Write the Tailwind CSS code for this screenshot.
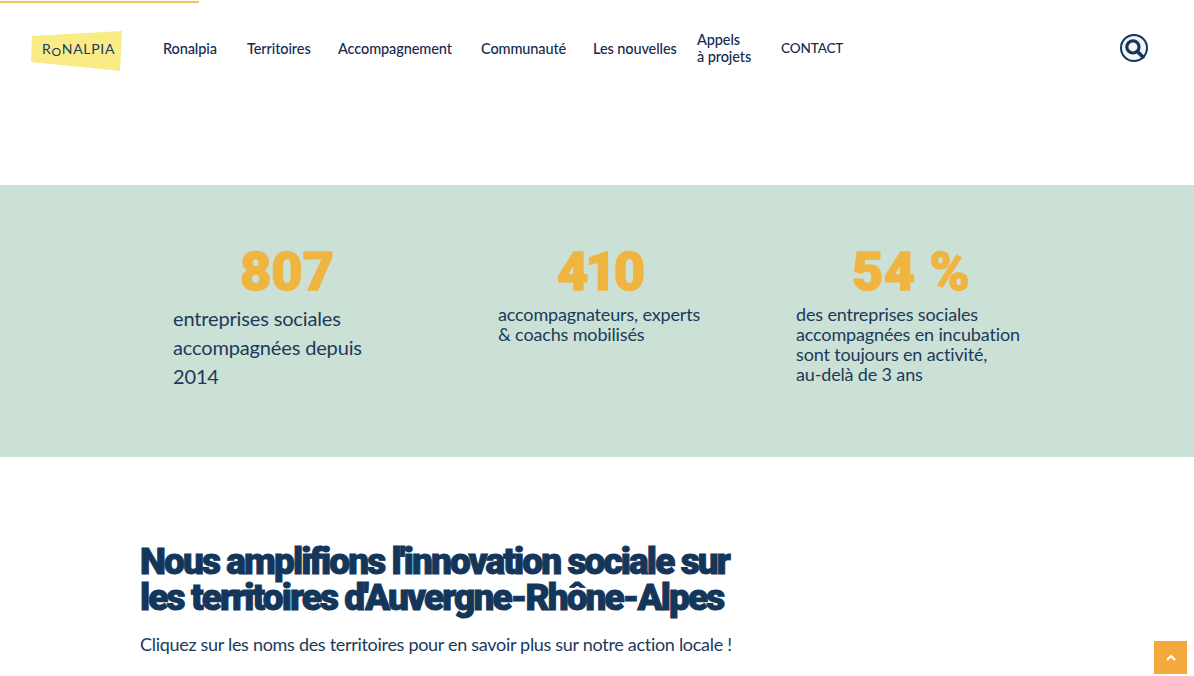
<!DOCTYPE html>
<html lang="fr">
<head>
    <meta charset="UTF-8">
    <meta name="viewport" content="width=device-width, initial-scale=1.0">
    <title>Ronalpia</title>
    <script src="https://cdn.jsdelivr.net/npm/@tailwindcss/browser@4"></script>
</head>
<body class="bg-white font-['Lato',sans-serif] text-[#1b3a5c] h-[676px] overflow-hidden relative">
    <!-- Scroll progress -->
    <div class="mt-[1px] h-[2px] w-[199px] bg-[#f6c15c]"></div>

    <!-- Header -->
    <header class="h-[182px] pt-[27px] pl-[31px] pr-[46px] flex items-start">
        <svg class="w-[92px] h-[42px] shrink-0" viewBox="0 0 92 42">
            <polygon points="1,6 91,1 89,41 0,32" fill="#f9ec86"/>
            <text x="11" y="24" font-family="Lato, sans-serif" font-size="14" letter-spacing="0.7" fill="#1b3a5c">R<tspan font-size="12" dy="1.5">O</tspan><tspan dy="-1.5">NALPIA</tspan></text>
        </svg>
        <nav class="ml-[40px] flex items-center h-[36px] text-[14.5px] leading-[17px] font-medium tracking-[-0.1px] text-[#16294f]">
            <a class="w-[84px]">Ronalpia</a>
            <a class="w-[91px]">Territoires</a>
            <a class="w-[143px]">Accompagnement</a>
            <a class="w-[112px]">Communauté</a>
            <a class="w-[104px]">Les nouvelles</a>
            <a class="w-[84px]">Appels<br>à projets</a>
            <a class="text-[13.5px]">CONTACT</a>
        </nav>
        <div class="ml-auto mt-[4px] w-[28px] h-[28px] rounded-full border-2 border-[#15355a] bg-[#f3f5f6] flex items-center justify-center">
            <svg class="w-[21px] h-[21px]" viewBox="0 0 20 20" fill="none" stroke="#15355a">
                <circle cx="8.5" cy="8.5" r="5.8" stroke-width="3"/>
                <path d="M13 13 L18 18" stroke-width="3.4" stroke-linecap="round"/>
            </svg>
        </div>
    </header>

    <!-- Chiffres -->
    <section class="h-[272px] bg-[#cce1d5] pl-[173px] pt-[57px] flex items-start">
        <div class="w-[228px]">
            <div class="text-center font-['Roboto',sans-serif] font-black text-[54px] leading-[60px] text-[#f0b441] [-webkit-text-stroke:1.5px_#f0b441]">807</div>
            <p class="mt-[2px] text-[20px] leading-[29px] w-[200px] tracking-[-0.15px]">entreprises sociales accompagnées depuis 2014</p>
        </div>
        <div class="ml-[97px] w-[203px]">
            <div class="text-center font-['Roboto',sans-serif] font-black text-[54px] leading-[60px] tracking-[-3px] text-[#f0b441] [-webkit-text-stroke:1.5px_#f0b441]">410</div>
            <p class="text-[18px] leading-[20px] mt-[2px] whitespace-nowrap tracking-[-0.15px]">accompagnateurs, experts<br>&amp; coachs mobilisés</p>
        </div>
        <div class="ml-[95px] w-[230px]">
            <div class="text-center font-['Roboto',sans-serif] font-black text-[54px] leading-[60px] tracking-[0.5px] text-[#f0b441] [-webkit-text-stroke:1.5px_#f0b441]">54 %</div>
            <p class="text-[18px] leading-[20px] mt-[2px] whitespace-nowrap tracking-[-0.15px]">des entreprises sociales<br>accompagnées en incubation<br>sont toujours en activité,<br>au-delà de 3 ans</p>
        </div>
    </section>

    <!-- Territoires -->
    <section class="pl-[140px] pt-[87px]">
        <h2 class="font-['Roboto',sans-serif] font-black text-[37px] leading-[36px] tracking-[-1.9px] text-[#14365a] [-webkit-text-stroke:1px_#14365a]">Nous amplifions l'innovation sociale sur<br>les territoires d'Auvergne-Rhône-Alpes</h2>
        <p class="mt-[16px] text-[18px] leading-[24px] tracking-[-0.3px]">Cliquez sur les noms des territoires pour en savoir plus sur notre action locale !</p>
    </section>

    <!-- Retour haut -->
    <button class="absolute left-[1154px] top-[641px] w-[33px] h-[33px] bg-[#f4a93c] flex items-center justify-center">
        <svg class="w-[10px] h-[7px]" viewBox="0 0 10 7" fill="none" stroke="white" stroke-width="2.2"><path d="M1 6 L5 2 L9 6"/></svg>
    </button>
</body>
</html>
